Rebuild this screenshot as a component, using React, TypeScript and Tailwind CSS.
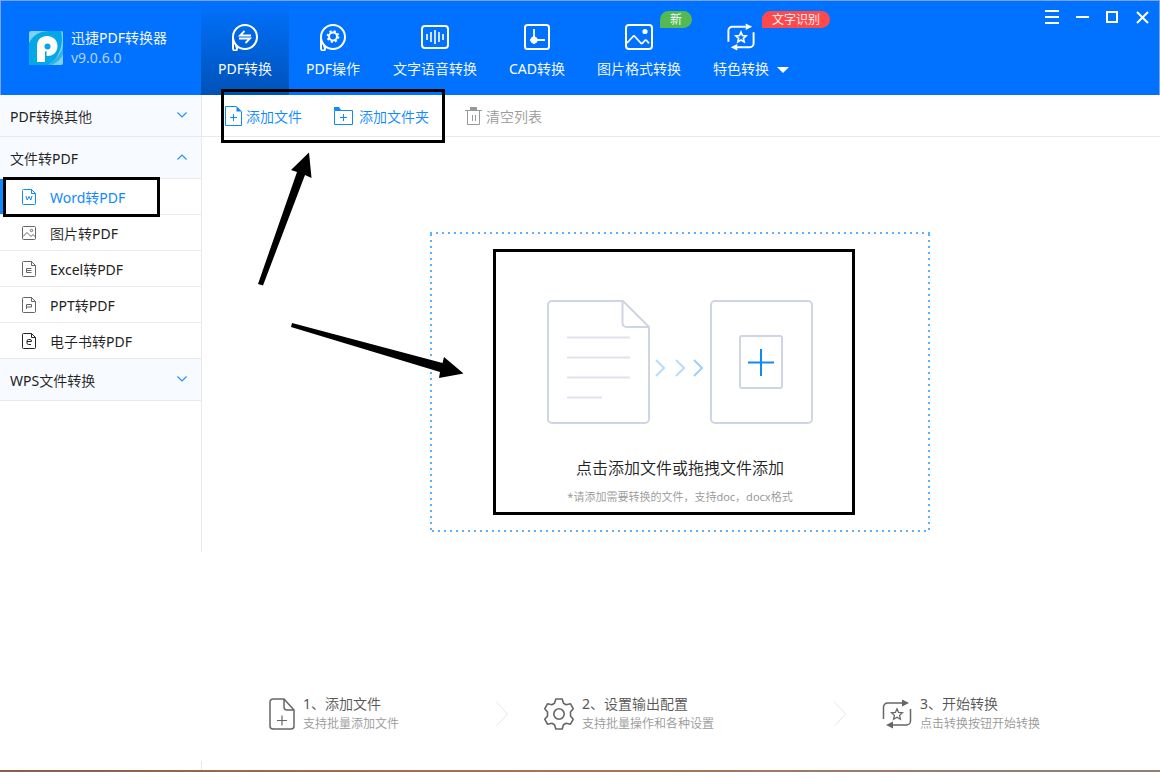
import { useState } from "react";
import type { ReactNode } from "react";

/* ---------- header icons (28x28) ---------- */

function BubbleShape() {
  return (
    <>
      <circle cx="14" cy="14" r="12" />
      <path d="M2 14v11.500a2 2 0 0 0 4 .2c0-1.400-.7-2.200-1.200-3.500" />
    </>
  );
}

function HeaderIcon({ children }: { children: ReactNode }) {
  return (
    <svg viewBox="0 0 28 28" className="h-7 w-7" fill="none" stroke="currentColor" strokeWidth="2">
      {children}
    </svg>
  );
}

const convertIcon = (
  <HeaderIcon>
    <BubbleShape />
    <path d="M20 12.500H9l4.500-4.500M8 15.500h11l-4.500 4.500" strokeWidth="1.800" />
  </HeaderIcon>
);

const operateIcon = (
  <HeaderIcon>
    <BubbleShape />
    <circle cx="14" cy="13.500" r="4" />
    <circle cx="14" cy="13.500" r="5.500" strokeDasharray="2.160 2.160" strokeWidth="1.800" />
  </HeaderIcon>
);

const voiceIcon = (
  <HeaderIcon>
    <rect x="1" y="3" width="26" height="22" rx="3" />
    <path d="M6 11v6M10 9v10M14 7v14M18 9v10M22 11v6" strokeWidth="1.600" />
  </HeaderIcon>
);

const cadIcon = (
  <HeaderIcon>
    <rect x="2" y="2" width="24" height="24" rx="2.500" />
    <path d="M11 6v15M7 17h15" strokeWidth="1.800" />
    <circle cx="11" cy="17" r="3.500" fill="currentColor" stroke="none" />
  </HeaderIcon>
);

const imageIcon = (
  <HeaderIcon>
    <rect x="1" y="2" width="26" height="24" rx="3" />
    <circle cx="20" cy="8.500" r="2.600" fill="currentColor" stroke="none" />
    <path d="M2 20l6-6.500c.6-.6 1.200-.6 1.800 0l6 6.500c.6.600 1.200.6 1.800 0l2.200-2.500c.6-.6 1.200-.6 1.800 0l2.400 2.800" strokeWidth="1.800" />
  </HeaderIcon>
);

function LoopStar({ className, strokeWidth }: { className: string; strokeWidth: number }) {
  return (
    <svg viewBox="0 0 30 30" className={className} fill="none" stroke="currentColor" strokeWidth={strokeWidth}>
      <path d="M1.500 20V8a4 4 0 0 1 4-4H20M28.500 10v12a4 4 0 0 1-4 4H10" />
      <path d="M20 .5l7 3.500-7 3.500zM11 22.500L4 26l7 3.500z" fill="currentColor" stroke="none" />
      <path d="M15 9.800l1.600 3.600 3.900.4-2.900 2.600.8 3.900-3.400-2-3.400 2 .8-3.900-2.900-2.600 3.900-.4z" strokeWidth={strokeWidth * 0.85} />
    </svg>
  );
}

/* ---------- sidebar icons (14x16) ---------- */

function DocIcon({ mark }: { mark: ReactNode }) {
  return (
    <svg viewBox="0 0 14 16" className="h-4 w-3.5" fill="none" stroke="currentColor">
      <path d="M9.500.5h-8a1 1 0 0 0-1 1v13a1 1 0 0 0 1 1h11a1 1 0 0 0 1-1v-10zM9.500.5v4h4" />
      {mark}
    </svg>
  );
}

const pictureIcon = (
  <svg viewBox="0 0 14 16" className="h-4 w-3.5" fill="none" stroke="currentColor">
    <rect x=".5" y="1.500" width="13" height="13" rx="1" />
    <circle cx="9.500" cy="5.500" r="1.200" />
    <path d="M1 11.500l4-4 4 4 2-2 2.500 2.500" />
  </svg>
);

const items = [
  { label: "Word转PDF", color: "text-[#444]", icon: <DocIcon mark={<path d="M4 7l1.200 4L7 7.500 8.800 11 10 7" />} /> },
  { label: "图片转PDF", color: "text-[#666]", icon: pictureIcon },
  { label: "Excel转PDF", color: "text-[#666]", icon: <DocIcon mark={<path d="M9.500 7.500h-5v4h5M4.500 9.500h5" />} /> },
  { label: "PPT转PDF", color: "text-[#666]", icon: <DocIcon mark={<path d="M4.500 12V7.500h5v2.500h-5" />} /> },
  { label: "电子书转PDF", color: "text-[#222]", icon: <DocIcon mark={<path d="M5 8.500h4.500V8a1.500 1.500 0 0 0-1.500-1.500H6.500A1.500 1.500 0 0 0 5 8v2a1.500 1.500 0 0 0 1.500 1.500H9" />} /> },
];

const tabs = [
  { label: "PDF转换", icon: convertIcon },
  { label: "PDF操作", icon: operateIcon },
  { label: "文字语音转换", icon: voiceIcon },
  { label: "CAD转换", icon: cadIcon },
  { label: "图片格式转换", icon: imageIcon, badge: "新", badgeColor: "bg-[#52b953]" },
  { label: "特色转换", icon: <LoopStar className="h-7 w-7" strokeWidth={2.1} />, badge: "文字识别", badgeColor: "bg-[#ff4a4d]", more: true },
];

const stepChevron = (
  <svg viewBox="0 0 12 26" className="h-[26px] w-3 shrink-0" fill="none" stroke="#e6e6e6">
    <path d="M.5 1l11 12-11 12" />
  </svg>
);

function Logo() {
  return (
    <svg viewBox="0 0 34 34" className="h-[34px] w-[34px]">
      <rect width="34" height="34" rx="2" fill="#7fd0f2" />
      <path d="M0 32V12C4 4 11 0 20 0h12c3 12-1 26-12 34H2a2 2 0 0 1-2-2z" fill="#05a8e6" />
      <path d="M34 12c0 9-6 16-16 22h4c6-2 10-6 12-11z" fill="#2fb4ea" />
      <path
        d="M8 31V15C8 8.500 12.500 5 18 5c6 0 10.500 4.200 10.500 10S24.300 25 19 25h-2v6z"
        fill="#fff"
      />
      <circle cx="18.500" cy="15.500" r="3" fill="#05a8e6" />
      <path d="M16 20.500V31h1.500V20z" fill="#05a8e6" />
    </svg>
  );
}

function Step({ icon, title, note }: { icon: ReactNode; title: string; note: string }) {
  return (
    <div className="flex shrink-0 items-center gap-2">
      {icon}
      <div>
        <p className="text-sm leading-5 text-[#555]">{title}</p>
        <p className="text-xs leading-5 text-[#999]">{note}</p>
      </div>
    </div>
  );
}

function Group({ label, open, onClick }: { label: string; open?: boolean; onClick?: () => void }) {
  return (
    <button
      type="button"
      aria-expanded={!!open}
      onClick={onClick}
      className="flex h-[42px] w-full items-center justify-between border-b border-[#e9e9e9] bg-[#f7faff] pt-0.5 pr-3.5 pl-2.5 text-left text-[#222]"
    >
      {label}
      <svg viewBox="0 0 10 6" className="mb-1 h-1.5 w-2.5" fill="none" stroke="#2291f5" strokeWidth="1.200">
        <path d={open ? "M.5 5.500L5 1l4.500 4.500" : "M.5.5L5 5 9.500.5"} />
      </svg>
    </button>
  );
}

export default function App() {
  const [tab, setTab] = useState("PDF转换");
  const [active, setActive] = useState("Word转PDF");
  const [open, setOpen] = useState(true);

  return (
    <div className="flex min-h-screen flex-col bg-white font-['Noto_Sans','Noto_Sans_CJK_SC_DemiLight','Noto_Sans_CJK_SC',sans-serif] text-sm leading-5">
      {/* Header */}
      <header className="flex h-[95px] border-x border-t border-[#7da3ff] bg-[#0072ff] text-white">
        <div className="flex w-[200px] shrink-0 items-center gap-2 pl-7">
          <Logo />
          <div>
            <h1>迅捷PDF转换器</h1>
            <p className="text-[#b3d4ff]">v9.0.6.0</p>
          </div>
        </div>

        <nav className="flex flex-1">
          {tabs.map((t) => (
            <button
              key={t.label}
              type="button"
              onClick={() => setTab(t.label)}
              className={`flex min-w-[88px] shrink-0 justify-center gap-2 px-4 pt-[22px] ${t.label === tab ? "bg-linear-to-b from-[#0072ff] to-[#0052b8]" : ""}`}
            >
              <span className="flex flex-col items-center gap-2">
                <span className="relative">
                  {t.icon}
                  {t.badge && (
                    <span className={`absolute -top-3 left-[35px] rounded-t-full rounded-br-full px-2.5 text-xs leading-[17px] whitespace-nowrap ${t.badgeColor}`}>
                      {t.badge}
                    </span>
                  )}
                </span>
                <span>{t.label}</span>
              </span>
              {t.more && (
                <svg viewBox="0 0 12 6" className="mt-11 h-1.5 w-3" fill="currentColor">
                  <path d="M0 0h12L6 6z" />
                </svg>
              )}
            </button>
          ))}
        </nav>

        <div className="flex items-start gap-4 pt-[9px] pr-2.5">
          <button type="button" aria-label="菜单">
            <svg viewBox="0 0 14 14" className="h-3.5 w-3.5" stroke="currentColor" strokeWidth="2">
              <path d="M0 1h14M0 7h14M0 13h14" />
            </svg>
          </button>
          <button type="button" aria-label="最小化">
            <svg viewBox="0 0 14 14" className="h-3.5 w-3.5" stroke="currentColor" strokeWidth="2">
              <path d="M1 7h13" />
            </svg>
          </button>
          <button type="button" aria-label="最大化">
            <svg viewBox="0 0 14 14" className="h-3.5 w-3.5" fill="none" stroke="currentColor" strokeWidth="2">
              <path d="M2 2h10v10H2z" />
            </svg>
          </button>
          <button type="button" aria-label="关闭">
            <svg viewBox="0 0 14 14" className="h-3.5 w-3.5" stroke="currentColor" strokeWidth="2">
              <path d="M2 2l11 11M13 2L2 13" />
            </svg>
          </button>
        </div>
      </header>

      <div className="flex flex-1">
        {/* Sidebar */}
        <aside className="flex w-[202px] shrink-0 flex-col">
          <div className="flex-1 border-r border-[#e9e9e9]">
            <Group label="PDF转换其他" />
            <Group label="文件转PDF" open={open} onClick={() => setOpen(!open)} />
            {open && (
              <ul>
                {items.map((item) => {
                  const isActive = item.label === active;
                  return (
                    <li key={item.label} className="relative border-b border-[#e9e9e9]">
                      <button
                        type="button"
                        onClick={() => setActive(item.label)}
                        className={`flex h-[35px] w-full items-center gap-3.5 border-l-4 pl-[18px] ${isActive ? "border-[#1089ff] text-[#1089ff]" : "border-transparent text-[#222]"}`}
                      >
                        <span className={isActive ? "" : item.color}>{item.icon}</span>
                        <span className="pt-0.5">{item.label}</span>
                      </button>
                      {isActive && <div className="pointer-events-none absolute -top-0.5 left-[3px] h-10 w-[157px] border-3 border-black" />}
                    </li>
                  );
                })}
              </ul>
            )}
            <Group label="WPS文件转换" />
          </div>
          <div className="h-[209px]" />
          <div className="h-[9px] border-r border-[#e9e9e9]" />
        </aside>

        {/* Workspace */}
        <main className="relative flex min-w-0 flex-1 flex-col">
          <div className="flex h-[42px] items-center border-b border-[#e9e9e9] pl-[23px]">
            <div className="relative flex gap-8">
              <button type="button" className="flex items-center gap-1 text-[#1089ff]">
                <svg viewBox="0 0 17 20" className="h-5 w-[17px]" fill="none" stroke="currentColor">
                  <path d="M11.500.5H.5v19h16v-14M5 11.500h7M8.500 8v7" />
                  <path d="M11.500 0l5.500 5.500h-5.500z" fill="currentColor" stroke="none" />
                </svg>
                <span className="pt-0.5">添加文件</span>
              </button>
              <button type="button" className="flex items-center gap-1.5 text-[#1089ff]">
                <svg viewBox="0 0 19 20" className="h-5 w-[19px]" fill="none" stroke="currentColor">
                  <path d="M.5 4.500h18v14H.5zM6 11.500h7M9.500 8v7" />
                  <path d="M0 1h5l2 3H0z" fill="currentColor" stroke="none" />
                </svg>
                <span className="pt-0.5">添加文件夹</span>
              </button>
              <div className="pointer-events-none absolute -top-4 -right-4 -bottom-4 -left-1 border-3 border-black" />
            </div>
            <button type="button" className="ml-9 flex items-center gap-1 text-[#999]">
              <svg viewBox="0 0 17 20" className="h-5 w-[17px]" fill="none" stroke="currentColor">
                <path d="M0 4.500h17M2.500 4.500v14h12v-14M7.500 9v6M10.500 9v6" />
                <path d="M5 1h7v3H5z" fill="currentColor" stroke="none" />
              </svg>
              <span className="pt-0.5">清空列表</span>
            </button>
          </div>

          <div className="flex flex-1 flex-col items-center pt-[95px] pr-0.5">
            <button type="button" className="relative flex h-[300px] w-[500px] flex-col items-center pt-[68px]">
              <svg className="absolute inset-0 h-full w-full" viewBox="0 0 500 300" fill="none" stroke="#5eb0f9" strokeWidth="2">
                <path d="M0 1h500M1 2v298M499 2v298M2 299h498" strokeDasharray="2 4" />
              </svg>

              <svg viewBox="0 0 266 124" className="h-[124px] w-[266px]" fill="none" stroke="#d0d5e6" strokeWidth="2">
                <path d="M76 1H5a4 4 0 0 0-4 4v114a4 4 0 0 0 4 4h93a4 4 0 0 0 4-4V27zM75.500 1v22a4 4 0 0 0 4 4H102" />
                <path d="M20 37.500h63M20 57.500h63M20 77.500h63M20 97.500h35" stroke="#e0e3ef" />
                <path d="M109 60l8 8-8 8M129 60l8 8-8 8" stroke="#b8dcfd" />
                <path d="M147 60l8 8-8 8" stroke="#9ccffc" />
                <rect x="164" y="1" width="101" height="122" rx="4" />
                <rect x="193" y="36" width="42" height="52" rx="2" />
                <path d="M214 49v27M201 62.500h26" stroke="#1089f5" />
              </svg>

              <span className="mt-8 text-base leading-6 text-[#222]">点击添加文件或拖拽文件添加</span>
              <span className="mt-[9px] text-[11px] leading-4 text-[#999]">*请添加需要转换的文件，支持doc，docx格式</span>

              <div className="pointer-events-none absolute top-[17px] right-[75px] bottom-[17px] left-[63px] border-3 border-black" />
            </button>
          </div>

          <div className="flex items-center pb-9 pl-[67px]">
            <Step
              title="1、添加文件"
              note="支持批量添加文件"
              icon={
                <svg viewBox="0 0 26 32" className="h-8 w-[26px] text-[#666]" fill="none" stroke="currentColor" strokeWidth="1.500">
                  <path d="M15 1H4a3 3 0 0 0-3 3v24a3 3 0 0 0 3 3h18a3 3 0 0 0 3-3V12zM15 1v8a3 3 0 0 0 3 3h7" />
                  <path d="M8 22.500h10M13 17.500v10" strokeWidth="1.200" />
                </svg>
              }
            />
            <div className="mr-9 ml-[97px]">{stepChevron}</div>
            <Step
              title="2、设置输出配置"
              note="支持批量操作和各种设置"
              icon={
                <svg viewBox="0 0 30 32" className="h-8 w-[30px] text-[#666]" fill="none" stroke="currentColor" strokeWidth="1.600" strokeLinejoin="round">
                  <circle cx="15" cy="16" r="5.200" />
                  <path d="M11.800 1h6.400l1.300 4.300 2.600 1.500 4.400-1 2.700 4.900-2.700 3.200v4.200l2.700 3.200-2.700 4.900-4.400-1-2.600 1.500-1.300 4.300h-6.400l-1.300-4.300-2.600-1.500-4.400 1-2.700-4.900 2.700-3.200v-4.200L.8 10.700l2.700-4.900 4.400 1 2.600-1.500z" />
                </svg>
              }
            />
            <div className="mr-9 ml-[120px]">{stepChevron}</div>
            <Step
              title="3、开始转换"
              note="点击转换按钮开始转换"
              icon={
                <span className="text-[#666]">
                  <LoopStar className="h-[30px] w-[30px]" strokeWidth={1.5} />
                </span>
              }
            />
          </div>

          {/* Guide arrows */}
          <svg viewBox="0 0 280 300" className="pointer-events-none absolute top-0 left-0 h-[300px] w-[280px]">
            <path d="M56 189L95 77l-6-2 18-17.500L109.500 83 103 80 61 190.500z" />
            <path d="M90 228l150.500 40 1.500-6 19.500 16.500L237 283l1-6L89 232z" />
          </svg>
        </main>
      </div>

      <div className="h-0.5 bg-linear-to-r from-[#8a5f48] via-[#a87654] to-[#8f8078]" />
    </div>
  );
}
